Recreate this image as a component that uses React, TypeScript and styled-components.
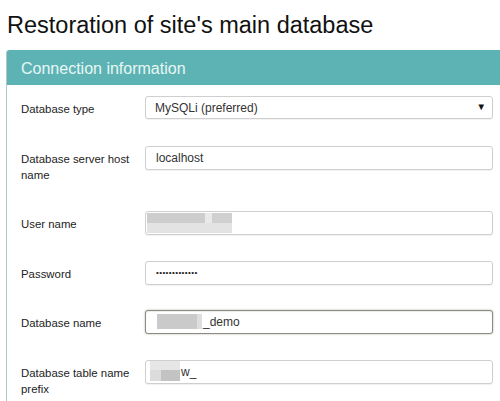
import React from "react";
import styled, { createGlobalStyle } from "styled-components";

const GlobalStyle = createGlobalStyle`
  html, body {
    margin: 0;
    padding: 0;
    background: #ffffff;
    overflow: hidden;
  }
  body {
    font-family: "Liberation Sans", Arial, sans-serif;
    color: #222;
  }
`;

type Cell = [number, string];
type MosaicRow = { h: number; cells: Cell[] };

const userNameMosaic: MosaicRow[] = [
  { h: 10, cells: [[58, "#cdcdcd"], [7, "#e9e9e9"], [20, "#d0d0d0"]] },
  { h: 10, cells: [[85, "#e3e3e3"]] },
];

const dbNameMosaic: MosaicRow[] = [
  { h: 15, cells: [[40, "#cacaca"], [5, "#dedede"]] },
];

const prefixMosaic: MosaicRow[] = [
  { h: 9, cells: [[30, "#e6e6e6"]] },
  { h: 11, cells: [[11, "#dcdcdc"], [19, "#c3c3c3"]] },
];

function Mosaic({ rows, left, top }: { rows: MosaicRow[]; left: number; top: number }) {
  return (
    <SMosaic style={{ left, top }}>
      {rows.map((row, i) => (
        <SMosaicRow key={i} style={{ height: row.h }}>
          {row.cells.map(([w, c], j) => (
            <span key={j} style={{ width: w, background: c }} />
          ))}
        </SMosaicRow>
      ))}
    </SMosaic>
  );
}

function App() {
  return (
    <>
      <GlobalStyle />
      <SPage>
        <STitle>Restoration of site's main database</STitle>
        <SPanel>
          <SPanelHeader>Connection information</SPanelHeader>
          <SPanelBody>
            <SRow>
              <SLabel>Database type</SLabel>
              <SSelectWrap>
                <SSelect defaultValue="mysqli">
                  <option value="mysqli">MySQLi (preferred)</option>
                  <option value="mysql">MySQL</option>
                  <option value="pdo">PDO</option>
                </SSelect>
                <SArrow>▼</SArrow>
              </SSelectWrap>
            </SRow>
            <SRow>
              <SLabel>Database server host name</SLabel>
              <SInput type="text" defaultValue="localhost" />
            </SRow>
            <SRow>
              <SLabel>User name</SLabel>
              <SFieldWrap>
                <SInput type="text" defaultValue="" />
                <Mosaic rows={userNameMosaic} left={2} top={2} />
              </SFieldWrap>
            </SRow>
            <SRow>
              <SLabel>Password</SLabel>
              <SPassword type="text" defaultValue="•••••••••••••" />
            </SRow>
            <SRow>
              <SLabel>Database name</SLabel>
              <SFieldWrap>
                <SInput type="text" defaultValue="_demo" $focused $indent={47} />
                <Mosaic rows={dbNameMosaic} left={12} top={4} />
              </SFieldWrap>
            </SRow>
            <SRow>
              <SLabel>Database table name prefix</SLabel>
              <SFieldWrap>
                <SInput type="text" defaultValue="w_" $indent={25} />
                <Mosaic rows={prefixMosaic} left={5} top={1} />
              </SFieldWrap>
            </SRow>
          </SPanelBody>
        </SPanel>
      </SPage>
    </>
  );
}

const SPage = styled.div`
  padding-left: 6px;
  margin-right: -14px;
`;

const STitle = styled.h1`
  margin: 0;
  padding: 11px 0 0 1px;
  font-size: 23.5px;
  line-height: 28px;
  font-weight: normal;
  color: #111;
`;

const SPanel = styled.section`
  margin-top: 11px;
  border-left: 1px solid #b4c3c8;
  border-top-left-radius: 3px;
  overflow: hidden;
`;

const SPanelHeader = styled.h2`
  margin: 0 0 0 -1px;
  height: 35px;
  box-sizing: border-box;
  padding: 2px 0 0 15px;
  line-height: 33px;
  font-size: 16px;
  font-weight: normal;
  background: #5db3b4;
  color: #e8f7f5;
  border-top-left-radius: 3px;
`;

const SPanelBody = styled.div`
  padding: 11px 21px 0 14px;
`;

const SRow = styled.div`
  display: grid;
  grid-template-columns: 124px 1fr;
  align-items: start;
  margin-bottom: 25.5px;
`;

const SLabel = styled.label`
  padding: 5px 12px 3px 0;
  font-size: 11.4px;
  line-height: 16px;
  color: #222;
`;

const SFieldWrap = styled.div`
  position: relative;
`;

const SInput = styled.input<{ $focused?: boolean; $indent?: number }>`
  display: block;
  width: 100%;
  height: 24px;
  box-sizing: border-box;
  padding: 0 10px;
  text-indent: ${(p) => p.$indent ?? 0}px;
  font-family: "Liberation Sans", Arial, sans-serif;
  font-size: 12px;
  color: #333;
  background: #fff;
  border: 1px solid ${(p) => (p.$focused ? "#8d8b82" : "#cfcfcf")};
  border-radius: 3px;
  box-shadow: ${(p) =>
    p.$focused
      ? "0 0 2px rgba(60, 55, 40, 0.45), inset 0 1px 1px rgba(0, 0, 0, 0.08)"
      : "0 1px 1px rgba(0, 0, 0, 0.06)"};
  outline: none;
`;

const SPassword = styled(SInput)`
  font-size: 8px;
  letter-spacing: 0.4px;
  color: #222;
`;

const SSelectWrap = styled.div`
  position: relative;
`;

const SSelect = styled.select`
  display: block;
  width: 100%;
  height: 23px;
  box-sizing: border-box;
  padding: 0 24px 0 9px;
  appearance: none;
  font-family: "Liberation Sans", Arial, sans-serif;
  font-size: 12px;
  color: #333;
  background: #fff;
  border: 1px solid #cfcfcf;
  border-radius: 3px;
  box-shadow: 0 1px 1px rgba(0, 0, 0, 0.06);
  outline: none;
`;

const SArrow = styled.span`
  position: absolute;
  right: 7px;
  top: 6px;
  font-size: 9.5px;
  line-height: 10px;
  color: #111;
  pointer-events: none;
`;

const SMosaic = styled.div`
  position: absolute;
  display: flex;
  flex-direction: column;
  filter: blur(0.6px);
  pointer-events: none;
`;

const SMosaicRow = styled.div`
  display: flex;

  span {
    display: block;
    height: 100%;
  }
`;

export default App;
